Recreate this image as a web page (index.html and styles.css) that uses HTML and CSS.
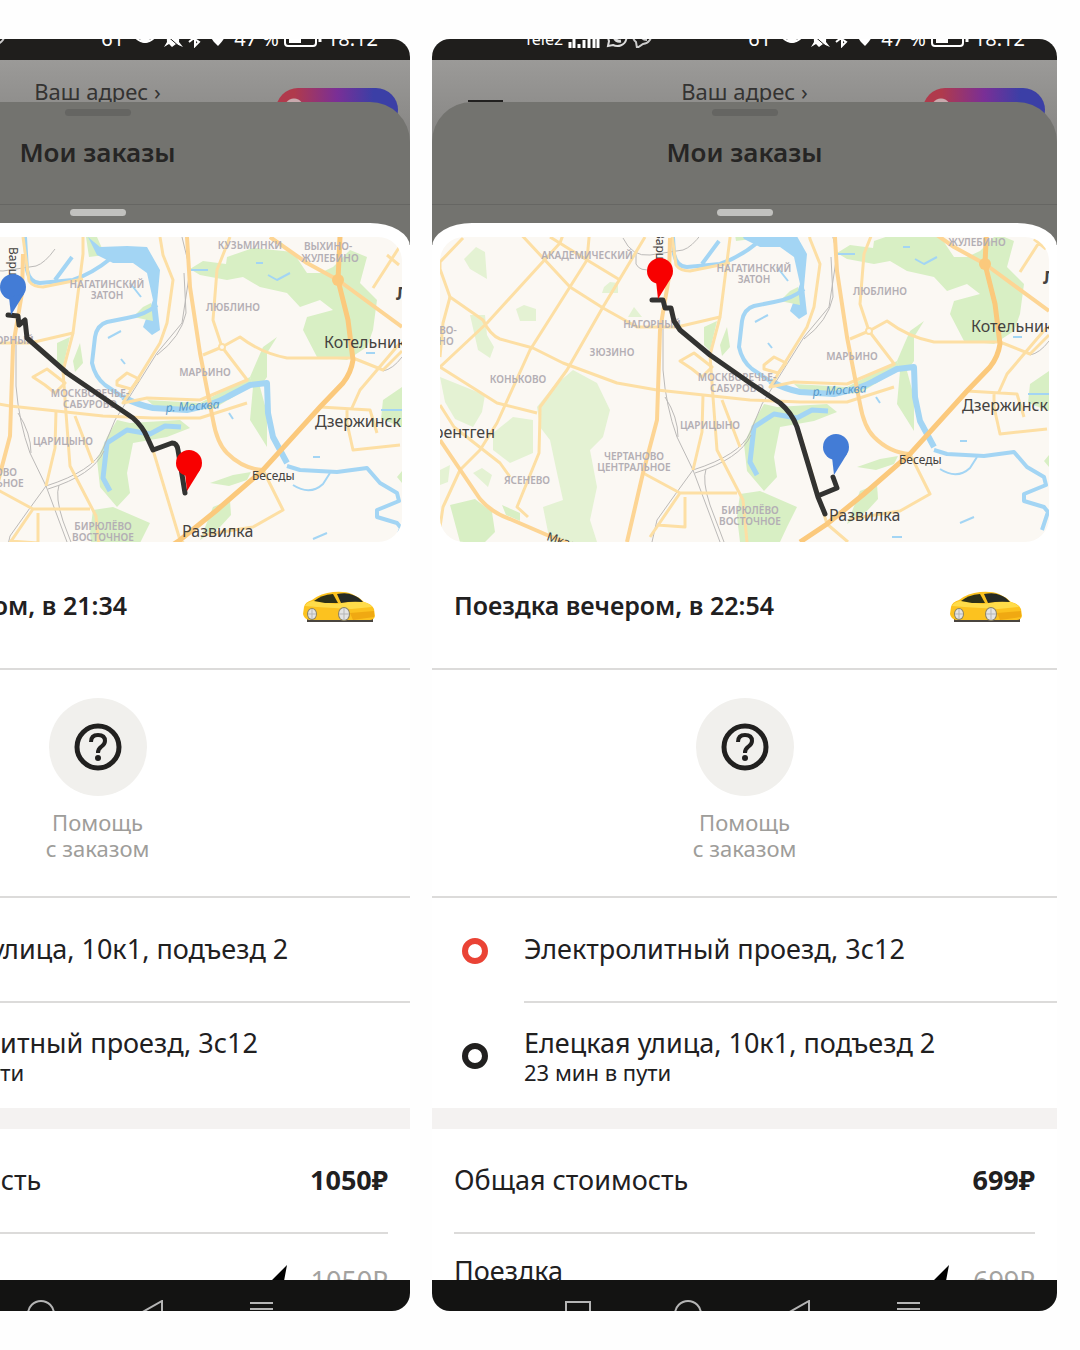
FILE: index.html
```html
<!DOCTYPE html>
<html lang="ru">

<head>
    <meta charset="UTF-8">
    <meta name="viewport" content="width=device-width, initial-scale=1.0">
    <title>Мои заказы</title>
    <link rel="stylesheet" href="styles.css">
</head>

<body>
    <!-- shared drawings -->
    <svg class="defs" width="0" height="0" aria-hidden="true">
        <defs>
            <g id="city">
                <rect x="0" y="-16" width="609" height="321" fill="#fbf8f3" />
                <g fill="#d8efc4">
                    <path d="M397 16L410 8L433 11L434 4L460 -5L500 -1L514 20L527 20L540 14L557 -3L574 4L567 30L584 47L580 77L574 94L554 107L524 104L510 77L514 64L540 57L527 47L507 54L494 40L467 34L450 24L434 27L407 22Z" />
                    <path d="M457 124L463 110L470 94L484 84L474 100L474 124L467 134L474 160L474 194L457 167L460 134Z" />
                    <path d="M354 147L407 150L457 124L460 132L420 156L367 158Z" />
                    <path d="M417 230L440 222L458 219L454 227L436 233Z" />
                    <path d="M437 247L420 254L407 287L427 274L438 262Z" />
                    <path d="M264 90L277 84L270 114L264 108ZM287 90L290 110L282 119L280 108Z" />
                    <path d="M590 147L609 134V174L588 166ZM604 224L609 218V230ZM293 -16H304L312 2L296 4Z" />
                    <path d="M324 167L337 170L387 167L397 175L374 184L340 190L334 220L337 240L324 254L307 234L304 207L314 184Z" />
                    <path d="M300 257L320 254L357 270L347 290L340 305H300L297 280Z" />
                </g>
                <g fill="#e4f2d3">
                    <path d="M133 133L157 146L170 173L163 200L150 213L157 250L150 283L157 305H110L103 270L123 263L117 236L110 203L100 190L97 170L113 150Z" />
                    <path d="M73 180L93 183V216L70 226L53 213V196Z" />
                    <path d="M0 140L20 148L45 158L42 175L33 190L15 182L5 165Z" />
                    <path d="M24 22L36 10L45 15L47 42L30 32ZM30 78L45 78L47 98L54 110L50 121L38 113ZM76 72L84 68L96 72V84L80 84ZM164 50L170 45L178 46V56H162ZM188 80L194 70L202 80Z" />
                    <path d="M33 236L42 231L52 238L48 250ZM0 233L10 228L8 245L0 248Z" />
                </g>
                <path d="M10 268L35 262L52 275L55 295L45 305H20ZM62 268L80 276V284L66 278Z" fill="#d8efc4" />

                <!-- water -->
                <path d="M295 -16L307 -6L334 -7L354 -6L367 17L364 50L367 77L359 82L350 74L353 66L360 47L354 20L340 10L320 10L304 2Z" fill="#a3d5f4" />
                <path d="M350 54L358 50L360 68L340 64Z" fill="#d8efc4" />
                <path d="M232 -16L234 17Q237 30 247 30L280 27Q300 20 317 6M262 27L279 4" fill="none" stroke="#a3d5f4" stroke-width="4" />
                <g fill="none" stroke="#a3d5f4" stroke-linejoin="round">
                    <path d="M364 52Q352 62 334 65L314 69Q304 72 302 84L299 110Q302 124 312 132L330 144" stroke-width="4" />
                    <path d="M330 144Q345 152 360 155L394 157Q420 152 434 144L457 132L474 130L475 160L480 184L494 210" stroke-width="6" />
                    <path d="M494 213L507 217L544 219L574 215L587 230L604 240L606 248L584 257L584 264L604 270L608 275L602 293" stroke-width="4" />
                    <path d="M500 232Q517 243 530 231L537 220" stroke-width="2" />
                    <path d="M317 238L310 225L314 190L334 177L357 181L372 173L388 174" stroke-width="5" />
                    <path d="M315 85L328 78M328 106L332 111M463 10H470M475 22L484 27L497 20M436 160L440 166M520 204H527M520 286L534 280M452 300H462M573 100H582M588 157H609M398 17L415 17M337 30L348 44" stroke-width="2" />
                </g>

                <!-- railways -->
                <g fill="none" stroke="#bcbab8" stroke-width="1">
                    <path d="M183 1Q192 20 210 18L243 13Q252 10 262 -4M196 15V27Q200 35 212 32" />
                    <path d="M223 83L223 133Q226 170 237 200L253 233L280 305M225 160Q238 180 238 200" />
                    <path d="M389 -16L397 17L389 70L364 100L322 167L310 196Q300 218 253 233Q236 256 217 283L212 305" />
                    <path d="M391 20L393 60Q388 84 364 102M311 198Q300 222 255 236M266 232Q262 244 270 268L284 305M590 118Q600 116 609 104" />
                </g>

                <!-- roads -->
                <g fill="none" stroke="#fddfa4" stroke-width="3" stroke-linejoin="round">
                    <path d="M0 130L47 86L120 6L128 -16M23 1L0 25V32L10 60L43 83Q50 98 60 102L93 111L123 126L177 146L217 153L310 163L360 165L407 165L454 150" />
                    <path d="M76 -8L130 50L163 71L197 90H237L280 80L290 1V-16" />
                    <path d="M150 -10L147 23L90 113L57 186L40 213L20 233L3 270L0 290M10 60L3 86L0 120" />
                    <path d="M205 0L163 70L127 133L100 170Q100 180 99 216L77 270L88 280M110 0L147 23L180 43" />
                    <path d="M0 130L57 166L97 176M0 168L14 190L60 226L70 240" />
                    <path d="M273 160L277 213L303 263L307 305M263 158L262 195L253 233M282 163L300 210" />
                    <path d="M203 236L240 256H297M245 260V290L217 288M240 256L210 300" />
                    <path d="M360 197L387 287L408 305M367 -16L370 2L380 27L374 70L367 90L330 150L354 145L407 147L454 127" />
                    <path d="M437 -16L424 17L420 67L429 94L447 84Q468 100 494 105H560L590 117L609 98M429 94L455 128M429 94L410 102M324 128L334 120L346 126L338 136L324 132Z" />
                    <path d="M527 154L577 157L584 180M554 157V170L560 197L607 192M607 90L567 137L558 157" />
                    <path d="M470 217L490 257L460 274L410 282M240 124L254 116L272 130L262 140L252 132ZM609 -10L580 35M594 2L606 12" />
                    <path d="M280 80L270 118L273 160" />
                    <path d="M230 -16L236 28Q240 34 250 34L290 26" />
                </g>
                <g fill="none" stroke="#fdd594" stroke-width="4" stroke-linejoin="round">
                    <path d="M230 1L229 40L220 93L217 183L203 236L187 305" />
                    <path d="M394 -16L397 34L407 100L420 167Q424 190 434 200Q450 216 470 217" />
                    <path d="M477 -16L514 10L545 27L609 74" />
                    <path d="M0 203L40 262Q52 276 70 282L107 298L130 307" />
                </g>
                <path d="M547 -16L545 27L555 67L560 107Q558 120 550 130L527 154L470 217L424 257L387 287L360 305" fill="none" stroke="#fbc97c" stroke-width="5" />
                <circle cx="545" cy="27" r="6" fill="#fbc97c" />
                <circle cx="429" cy="94" r="3" fill="#fbf8f3" stroke="#fddfa4" stroke-width="2" />

                <g class="district">
                    <text x="147" y="22">АКАДЕМИЧЕСКИЙ</text>
                    <text x="212" y="91">НАГОРНЫЙ</text>
                    <text x="172" y="119">ЗЮЗИНО</text>
                    <text x="78" y="146">КОНЬКОВО</text>
                    <text x="8" y="97">ВО-</text>
                    <text x="6" y="108">НО</text>
                    <text x="270" y="192">ЦАРИЦЫНО</text>
                    <text x="194" y="223">ЧЕРТАНОВО</text>
                    <text x="194" y="234">ЦЕНТРАЛЬНОЕ</text>
                    <text x="87" y="247">ЯСЕНЕВО</text>
                    <text x="297" y="144">МОСКВОРЕЧЬЕ-</text>
                    <text x="297" y="155">САБУРОВО</text>
                    <text x="314" y="35">НАГАТИНСКИЙ</text>
                    <text x="314" y="46">ЗАТОН</text>
                    <text x="440" y="58">ЛЮБЛИНО</text>
                    <text x="412" y="123">МАРЬИНО</text>
                    <text x="457" y="-4">КУЗЬМИНКИ</text>
                    <text x="535" y="-3">ВЫХИНО-</text>
                    <text x="537" y="9">ЖУЛЕБИНО</text>
                    <text x="310" y="277">БИРЮЛЁВО</text>
                    <text x="310" y="288">ВОСТОЧНОЕ</text>
                </g>
                <g class="town">
                    <text x="55" y="201" text-anchor="end">рентген</text>
                    <text x="531" y="95">Котельники</text>
                    <text x="522" y="174">Дзержинский</text>
                    <text x="389" y="284">Развилка</text>
                    <text class="village" x="459" y="227">Беседы</text>
                    <text class="village" transform="translate(106 303) rotate(18)">Мкад</text>
                    <text class="village" transform="translate(216 -6) rotate(90)">Варш</text>
                    <text class="big" x="603" y="47">Люберцы</text>
                </g>
                <text class="river" transform="translate(373 159) rotate(-4)">р. Москва</text>
            </g>

            <g id="pin">
                <circle cx="0" cy="0" r="13" />
                <path d="M-4 10L-2 28L11 7Z" />
            </g>

            <symbol id="car" viewBox="0 0 72 33">
                <path d="M4 30H70V33H4Z" fill="#4a453f" />
                <path d="M1 18Q2 13 9 11Q18 4 30 3Q42 2 49 5Q56 8 61 13Q69 15 71 20L72 27Q71 31 67 31H6Q1 30 0 25Z" fill="#fcc21f" />
                <path d="M2 17Q4 13 10 12L33 15Q50 12 61 13Q67 15 69 18L48 20L14 18Z" fill="#ffdc4a" />
                <path d="M11 12Q18 6 30 5L35 14L22 14Z" fill="#2d3018" />
                <path d="M34 5Q44 3 50 6Q56 8 60 13Q48 12 38 14Z" fill="#262a25" />
                <path d="M47 24L71 22V28L50 31Z" fill="#f0a912" />
                <ellipse cx="9" cy="25" rx="5" ry="6" fill="#8b8468" />
                <ellipse cx="9" cy="25" rx="4" ry="5" fill="#e4e4e4" />
                <ellipse cx="41" cy="25" rx="6" ry="7" fill="#8b8468" />
                <ellipse cx="41" cy="25" rx="5" ry="6" fill="#e4e4e4" />
                <path d="M9 20V30M5 25H13M41 19V31M36 25H46" stroke="#b5b5b5" stroke-width="1" />
            </symbol>

            <symbol id="help" viewBox="0 0 48 48">
                <circle cx="24" cy="24" r="21" fill="none" stroke="#21201f" stroke-width="5" />
                <path d="M17 19Q17 12 24 12Q31 12 31 18Q31 21 27 24Q24 26 24 30" fill="none" stroke="#21201f" stroke-width="4" />
                <circle cx="24" cy="35" r="3" fill="#21201f" />
            </symbol>

            <symbol id="bolt" viewBox="0 0 20 36">
                <path d="M16 0L0 16L5 18L1 36L18 18L13 16Z" />
            </symbol>

            <symbol id="signal" viewBox="0 0 32 18">
                <path d="M2 18V12M6 18V9M11 18V14M16 18V10M21 18V6M26 18V3M30 18V0" stroke="#fff" stroke-width="3" />
            </symbol>
            <symbol id="chats" viewBox="0 0 48 20">
                <path d="M3 18L4 13A9 8 0 1 1 8 17Z" fill="none" stroke="#ddd" stroke-width="2" />
                <path d="M9 8Q10 14 16 13" fill="none" stroke="#ddd" stroke-width="3" />
                <path d="M32 20L31 14A9 8 0 1 1 38 16Z" fill="none" stroke="#ccc" stroke-width="2" />
                <path d="M36 8Q37 12 42 12" fill="none" stroke="#ccc" stroke-width="2" />
            </symbol>
            <symbol id="tray" viewBox="0 0 100 20">
                <path d="M6 9Q16 -1 26 9Q16 19 6 9Z" fill="none" stroke="#fff" stroke-width="2" />
                <circle cx="16" cy="10" r="5" fill="#fff" />
                <path d="M35 19L38 14Q37 4 44 4Q51 4 50 14L54 19L47 16L43 19L40 16Z" fill="#fff" />
                <path d="M36 6L52 20" stroke="#1f1e1c" stroke-width="1" />
                <path d="M60 7L70 14L66 18V2L70 6L60 14" fill="none" stroke="#fff" stroke-width="2" />
                <path d="M82 8A6 6 0 1 1 96 8Q95 12 89 18Q82 12 82 8Z" fill="#fff" />
            </symbol>
            <symbol id="battery" viewBox="0 0 38 18">
                <rect x="1" y="1" width="31" height="15" rx="3" fill="none" stroke="#fff" stroke-width="2" />
                <rect x="5" y="4" width="12" height="9" fill="#fff" />
                <path d="M36 5V12" stroke="#fff" stroke-width="3" />
            </symbol>

            <symbol id="nav-square" viewBox="0 0 28 28">
                <rect x="2" y="2" width="24" height="24" fill="none" stroke="#b5b5b5" stroke-width="2" />
            </symbol>
            <symbol id="nav-circle" viewBox="0 0 28 28">
                <circle cx="14" cy="14" r="13" fill="none" stroke="#b5b5b5" stroke-width="2" />
            </symbol>
            <symbol id="nav-back" viewBox="0 0 28 28">
                <path d="M25 1V27L2 14Z" fill="none" stroke="#b5b5b5" stroke-width="2" />
            </symbol>
            <symbol id="nav-menu" viewBox="0 0 28 28">
                <path d="M3 3H26M3 9H26M3 15H26" stroke="#b5b5b5" stroke-width="2" />
            </symbol>
        </defs>
    </svg>

    <main class="gallery">
        <section class="phone">
            <div class="status">
                <div class="status-left">
                    <span>Tele2</span>
                    <svg width="32" height="18"><use href="#signal" /></svg>
                    <svg width="48" height="20"><use href="#chats" /></svg>
                </div>
                <div class="status-right">
                    <span>61</span>
                    <svg width="100" height="20"><use href="#tray" /></svg>
                    <span>47 %</span>
                    <svg width="38" height="18"><use href="#battery" /></svg>
                    <span>18:12</span>
                </div>
            </div>
            <div class="app">
                <header class="address">
                    <span class="burger"></span>
                    <a href="#">Ваш адрес <small>›</small></a>
                    <span class="plus"></span>
                </header>
                <div class="orders">
                    <div class="handle"></div>
                    <h2>Мои заказы</h2>
                    <div class="orders-foot">
                        <div class="handle light"></div>
                    </div>
                </div>
            </div>
            <article class="trip">
                <svg class="map" viewBox="0 -16 609 305" role="img" aria-label="Маршрут поездки">
                    <use href="#city" />
                    <path class="route" d="M215 62L225 63L226 72L232 67L234 85L274 120L340 165Q350 174 354 184L360 197L379 190Q384 190 385 197L392 240" />
                    <use href="#pin" class="pin-blue" transform="translate(220 34)" />
                    <use href="#pin" class="pin-red" transform="translate(396 210)" />
                </svg>
                <div class="trip-title">
                    <h1>Поездка вечером, в 21:34</h1>
                    <svg width="72" height="33"><use href="#car" /></svg>
                </div>
                <div class="help">
                    <button type="button">
                        <span class="help-icon"><svg width="48" height="48"><use href="#help" /></svg></span>
                        Помощь<br>с заказом
                    </button>
                </div>
                <div class="stop">
                    <span class="ring from"></span>
                    <div class="stop-text">Елецкая улица, 10к1, подъезд 2</div>
                </div>
                <div class="stop last">
                    <span class="ring"></span>
                    <div class="stop-text">Электролитный проезд, 3с12<small>23 мин в пути</small></div>
                </div>
                <div class="cost total">
                    <span>Общая стоимость</span>
                    <b>1050₽</b>
                </div>
                <div class="cost detail">
                    <span>Поездка</span>
                    <span class="price"><svg width="20" height="36"><use href="#bolt" /></svg>1050₽</span>
                </div>
            </article>
            <nav class="navbar">
                <button type="button" aria-label="Скрыть"><svg width="28" height="28"><use href="#nav-square" /></svg></button>
                <button type="button" aria-label="Домой"><svg width="28" height="28"><use href="#nav-circle" /></svg></button>
                <button type="button" aria-label="Назад"><svg width="28" height="28"><use href="#nav-back" /></svg></button>
                <button type="button" aria-label="Меню"><svg width="28" height="28"><use href="#nav-menu" /></svg></button>
            </nav>
        </section>

        <section class="phone">
            <div class="status">
                <div class="status-left">
                    <span>Tele2</span>
                    <svg width="32" height="18"><use href="#signal" /></svg>
                    <svg width="48" height="20"><use href="#chats" /></svg>
                </div>
                <div class="status-right">
                    <span>61</span>
                    <svg width="100" height="20"><use href="#tray" /></svg>
                    <span>47 %</span>
                    <svg width="38" height="18"><use href="#battery" /></svg>
                    <span>18:12</span>
                </div>
            </div>
            <div class="app">
                <header class="address">
                    <span class="burger"></span>
                    <a href="#">Ваш адрес <small>›</small></a>
                    <span class="plus"></span>
                </header>
                <div class="orders">
                    <div class="handle"></div>
                    <h2>Мои заказы</h2>
                    <div class="orders-foot">
                        <div class="handle light"></div>
                    </div>
                </div>
            </div>
            <article class="trip">
                <svg class="map" viewBox="0 0 609 305" role="img" aria-label="Маршрут поездки">
                    <use href="#city" />
                    <path class="route" d="M212 63H223L225 71H231L234 84L240 93L270 118L310 146L340 166Q352 176 357 190L378 260L385 277M380 258L397 251L393 240" />
                    <use href="#pin" class="pin-red" transform="translate(220 34)" />
                    <use href="#pin" class="pin-blue" transform="translate(396 210)" />
                </svg>
                <div class="trip-title">
                    <h1>Поездка вечером, в 22:54</h1>
                    <svg width="72" height="33"><use href="#car" /></svg>
                </div>
                <div class="help">
                    <button type="button">
                        <span class="help-icon"><svg width="48" height="48"><use href="#help" /></svg></span>
                        Помощь<br>с заказом
                    </button>
                </div>
                <div class="stop">
                    <span class="ring from"></span>
                    <div class="stop-text">Электролитный проезд, 3с12</div>
                </div>
                <div class="stop last">
                    <span class="ring"></span>
                    <div class="stop-text">Елецкая улица, 10к1, подъезд 2<small>23 мин в пути</small></div>
                </div>
                <div class="cost total">
                    <span>Общая стоимость</span>
                    <b>699₽</b>
                </div>
                <div class="cost detail">
                    <span>Поездка</span>
                    <span class="price"><svg width="20" height="36"><use href="#bolt" /></svg>699₽</span>
                </div>
            </article>
            <nav class="navbar">
                <button type="button" aria-label="Скрыть"><svg width="28" height="28"><use href="#nav-square" /></svg></button>
                <button type="button" aria-label="Домой"><svg width="28" height="28"><use href="#nav-circle" /></svg></button>
                <button type="button" aria-label="Назад"><svg width="28" height="28"><use href="#nav-back" /></svg></button>
                <button type="button" aria-label="Меню"><svg width="28" height="28"><use href="#nav-menu" /></svg></button>
            </nav>
        </section>
    </main>
</body>

</html>
```
FILE: styles.css
```css
* {
    box-sizing: border-box;
}

body {
    margin: 0;
    background: #fefefe;
    color: #21201f;
    font-family: "Noto Sans", sans-serif;
    font-size: 27px;
    line-height: 32px;
}

h1,
h2 {
    margin: 0;
    font-size: 25px;
    font-weight: 600;
}

svg {
    display: block;
    flex: none;
}

button {
    padding: 0;
    border: 0;
    background: none;
    color: inherit;
    font: inherit;
    cursor: pointer;
}

.defs {
    position: absolute;
}

/* the older screen runs off the left side */
.gallery {
    display: flex;
    justify-content: flex-end;
    gap: 22px;
    padding: 39px 23px 39px 0;
    overflow: hidden;
}

.phone {
    flex: none;
    width: min(625px, 92vw);
    border-radius: 18px;
    overflow: hidden;
    background: #fff;
}

/* status bar */
.status {
    display: flex;
    justify-content: space-between;
    align-items: flex-end;
    height: 21px;
    padding: 0 32px 12px 92px;
    overflow: hidden;
    background: #1f1e1c;
    color: #fff;
    font-size: 20px;
    line-height: 18px;
}

.status-left,
.status-right {
    display: flex;
    align-items: flex-end;
    gap: 5px;
}

.status-left {
    font-size: 16px;
}

/* dimmed screens under the trip card */
.app {
    background: linear-gradient(#9b9a98, #868583 80px);
}

.address {
    display: flex;
    justify-content: space-between;
    height: 42px;
    padding: 0 12px;
    font-size: 22px;
}

.address a {
    padding-top: 15px;
    color: #343332;
    text-decoration: none;
}

.address small {
    font-size: 22px;
}

.burger {
    width: 122px;
    margin-top: 40px;
    height: 2px;
    background: linear-gradient(#21201f, #21201f) no-repeat 24px 0 / 35px 2px;
}

.plus {
    width: 122px;
    height: 44px;
    margin-top: 28px;
    border-radius: 28px;
    background: radial-gradient(circle at 18px 20px, #c9a9ad 9px, transparent 10px), linear-gradient(90deg, #b03a4c 15%, #7a2f96 50%, #3b3fa6 80%);
}

.orders {
    position: relative;
    margin-bottom: -22px;
    padding-top: 7px;
    border-radius: 40px 40px 0 0;
    background: #73736f;
}

.handle {
    width: 66px;
    height: 7px;
    margin: 0 auto;
    border-radius: 4px;
    background: #656562;
}

.orders h2 {
    padding: 20px 0 36px;
    color: #262524;
    font-size: 26px;
    text-align: center;
}

.orders-foot {
    height: 41px;
    padding-top: 4px;
    border-top: 1px solid #666663;
}

.handle.light {
    width: 56px;
    background: #c1c1be;
}

/* trip card */
.trip {
    position: relative;
    padding-top: 14px;
    border-radius: 40px 40px 0 0 / 24px 24px 0 0;
    background: #fff;
}

.map {
    width: calc(100% - 16px);
    height: auto;
    margin: 0 8px;
    border-radius: 24px;
}

.district {
    fill: #b3aeb4;
    font-size: 10px;
    font-weight: 600;
    text-anchor: middle;
}

.town {
    fill: #44423f;
    font-size: 16px;
}

.village {
    font-size: 12px;
}

.big {
    font-size: 18px;
    font-weight: 700;
}

.river {
    fill: #5a9ac8;
    font-size: 12px;
    font-style: italic;
}

.route {
    fill: none;
    stroke: #333331;
    stroke-width: 5;
    stroke-linejoin: round;
    stroke-linecap: round;
}

.pin-red {
    fill: #f80000;
}

.pin-blue {
    fill: #437cd6;
}

.trip-title {
    display: flex;
    justify-content: space-between;
    align-items: center;
    height: 128px;
    padding: 0 35px 0 22px;
    border-bottom: 2px solid #dcdbda;
}

.help {
    display: flex;
    justify-content: center;
    padding: 28px 0 35px;
    border-bottom: 2px solid #dcdbda;
    color: #9e9d9a;
    font-size: 22px;
    line-height: 26px;
}

.help-icon {
    display: flex;
    align-items: center;
    justify-content: center;
    width: 98px;
    height: 98px;
    margin: 0 auto 13px;
    border-radius: 50%;
    background: #f1f0ed;
}

.stop {
    display: flex;
    gap: 36px;
    align-items: center;
    padding-left: 30px;
}

.stop-text {
    flex: 1;
    padding: 35px 0 36px;
    border-bottom: 2px solid #dcdbda;
}

.stop-text small {
    display: block;
    font-size: 22px;
    line-height: 26px;
}

.stop.last {
    border-bottom: 21px solid #f4f2f1;
}

.stop.last .stop-text {
    padding: 24px 0 23px;
    border: 0;
}

.ring {
    width: 26px;
    height: 26px;
    border: 6px solid #21201f;
    border-radius: 50%;
}

.ring.from {
    border-color: #ea4335;
}

.cost {
    display: flex;
    justify-content: space-between;
    margin: 0 22px;
}

.total {
    padding: 35px 0 36px;
    border-bottom: 2px solid #dcdbda;
}

/* cut off by the system bar */
.detail {
    height: 46px;
    padding-top: 21px;
    overflow: hidden;
}

.price {
    display: flex;
    gap: 20px;
    padding-top: 10px;
    color: #a3a29f;
}

.price svg {
    fill: #000;
}

.navbar {
    display: flex;
    justify-content: center;
    align-items: flex-start;
    gap: 82px;
    height: 31px;
    padding: 20px 4px 0 0;
    overflow: hidden;
    background: #131312;
}
```
